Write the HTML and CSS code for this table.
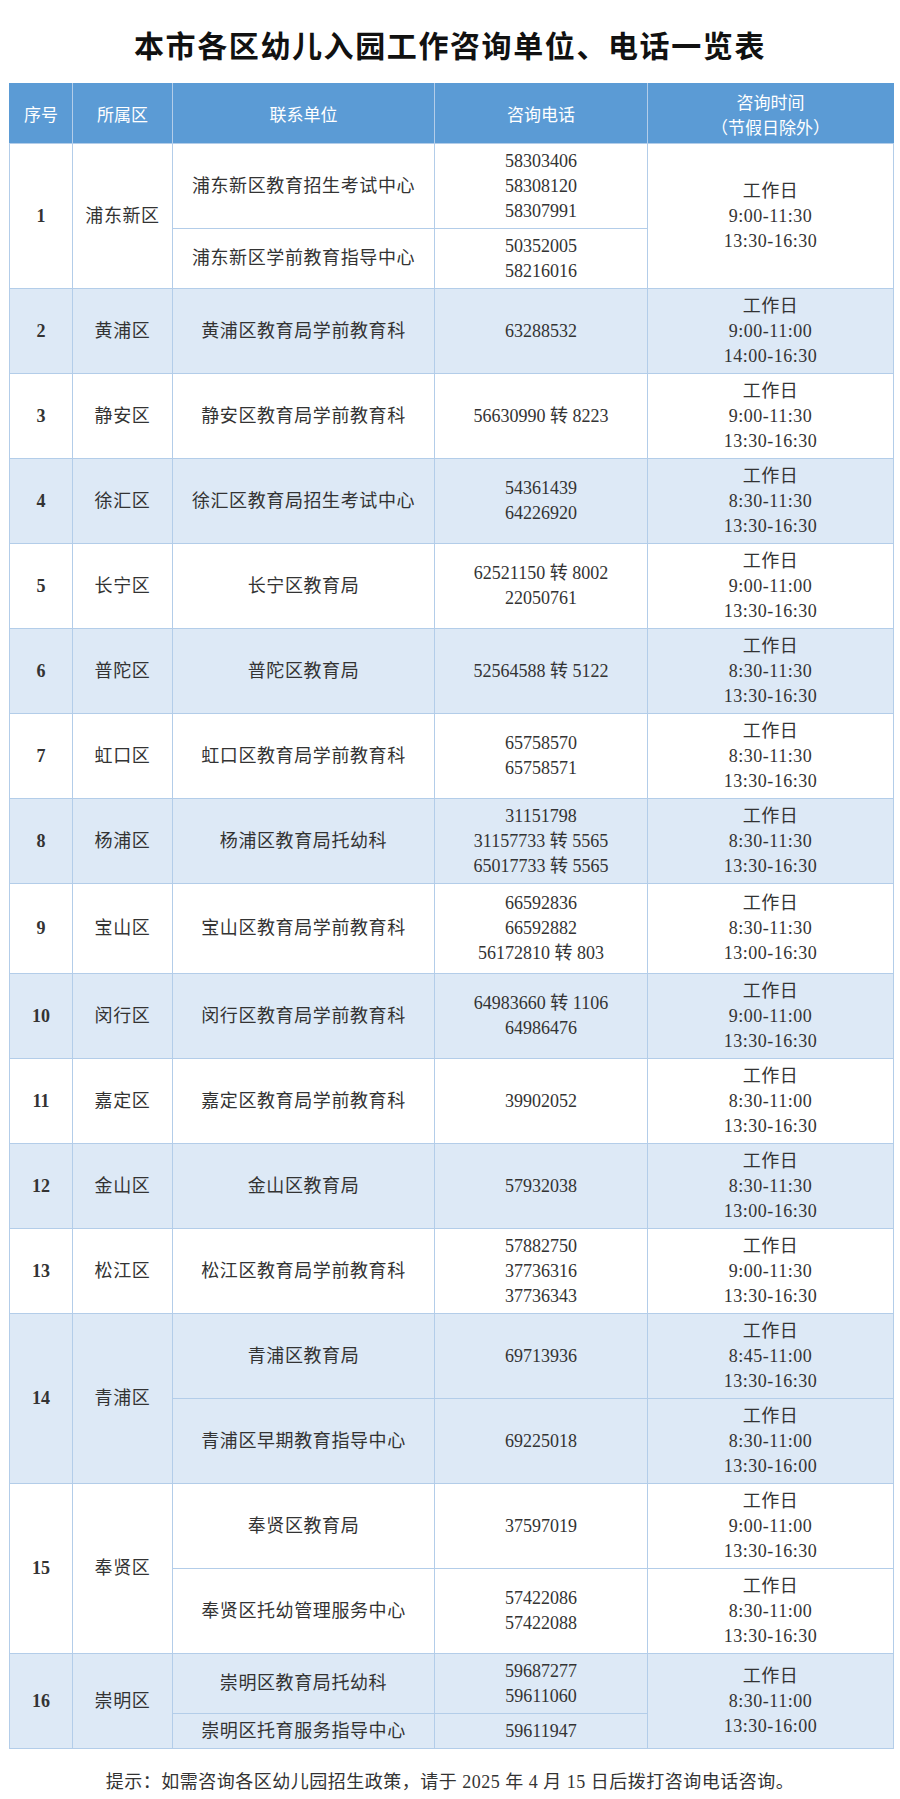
FILE: index.html
```html
<!DOCTYPE html>
<html lang="zh-CN">
<head>
<meta charset="utf-8">
<title>本市各区幼儿入园工作咨询单位、电话一览表</title>
<link rel="stylesheet" href="styles.css">
</head>
<body>
<h1 class="title">本市各区幼儿入园工作咨询单位、电话一览表</h1>
<table class="tbl">
  <colgroup>
    <col class="c1"><col class="c2"><col class="c3"><col class="c4"><col class="c5">
  </colgroup>
  <thead>
    <tr class="head">
      <th>序号</th><th>所属区</th><th>联系单位</th><th>咨询电话</th><th>咨询时间<br>（节假日除外）</th>
    </tr>
  </thead>
  <tbody>
    <tr class="h85">
      <td class="no" rowspan="2">1</td><td class="zh" rowspan="2">浦东新区</td><td class="zh">浦东新区教育招生考试中心</td><td>58303406<br>58308120<br>58307991</td><td class="tm" rowspan="2">工作日<br>9:00-11:30<br>13:30-16:30</td>
    </tr>
    <tr class="h60"><td class="zh">浦东新区学前教育指导中心</td><td>50352005<br>58216016</td></tr>

    <tr class="h85 alt"><td class="no">2</td><td class="zh">黄浦区</td><td class="zh">黄浦区教育局学前教育科</td><td>63288532</td><td class="tm">工作日<br>9:00-11:00<br>14:00-16:30</td></tr>
    <tr class="h85"><td class="no">3</td><td class="zh">静安区</td><td class="zh">静安区教育局学前教育科</td><td>56630990 转 8223</td><td class="tm">工作日<br>9:00-11:30<br>13:30-16:30</td></tr>
    <tr class="h85 alt"><td class="no">4</td><td class="zh">徐汇区</td><td class="zh">徐汇区教育局招生考试中心</td><td>54361439<br>64226920</td><td class="tm">工作日<br>8:30-11:30<br>13:30-16:30</td></tr>
    <tr class="h85"><td class="no">5</td><td class="zh">长宁区</td><td class="zh">长宁区教育局</td><td>62521150 转 8002<br>22050761</td><td class="tm">工作日<br>9:00-11:00<br>13:30-16:30</td></tr>
    <tr class="h85 alt"><td class="no">6</td><td class="zh">普陀区</td><td class="zh">普陀区教育局</td><td>52564588 转 5122</td><td class="tm">工作日<br>8:30-11:30<br>13:30-16:30</td></tr>
    <tr class="h85"><td class="no">7</td><td class="zh">虹口区</td><td class="zh">虹口区教育局学前教育科</td><td>65758570<br>65758571</td><td class="tm">工作日<br>8:30-11:30<br>13:30-16:30</td></tr>
    <tr class="h85 alt"><td class="no">8</td><td class="zh">杨浦区</td><td class="zh">杨浦区教育局托幼科</td><td>31151798<br>31157733 转 5565<br>65017733 转 5565</td><td class="tm">工作日<br>8:30-11:30<br>13:30-16:30</td></tr>
    <tr class="h90"><td class="no">9</td><td class="zh">宝山区</td><td class="zh">宝山区教育局学前教育科</td><td>66592836<br>66592882<br>56172810 转 803</td><td class="tm">工作日<br>8:30-11:30<br>13:00-16:30</td></tr>
    <tr class="h85 alt"><td class="no">10</td><td class="zh">闵行区</td><td class="zh">闵行区教育局学前教育科</td><td>64983660 转 1106<br>64986476</td><td class="tm">工作日<br>9:00-11:00<br>13:30-16:30</td></tr>
    <tr class="h85"><td class="no">11</td><td class="zh">嘉定区</td><td class="zh">嘉定区教育局学前教育科</td><td>39902052</td><td class="tm">工作日<br>8:30-11:00<br>13:30-16:30</td></tr>
    <tr class="h85 alt"><td class="no">12</td><td class="zh">金山区</td><td class="zh">金山区教育局</td><td>57932038</td><td class="tm">工作日<br>8:30-11:30<br>13:00-16:30</td></tr>
    <tr class="h85"><td class="no">13</td><td class="zh">松江区</td><td class="zh">松江区教育局学前教育科</td><td>57882750<br>37736316<br>37736343</td><td class="tm">工作日<br>9:00-11:30<br>13:30-16:30</td></tr>

    <tr class="h85 alt"><td class="no" rowspan="2">14</td><td class="zh" rowspan="2">青浦区</td><td class="zh">青浦区教育局</td><td>69713936</td><td class="tm">工作日<br>8:45-11:00<br>13:30-16:30</td></tr>
    <tr class="h85 alt"><td class="zh">青浦区早期教育指导中心</td><td>69225018</td><td class="tm">工作日<br>8:30-11:00<br>13:30-16:00</td></tr>

    <tr class="h85"><td class="no" rowspan="2">15</td><td class="zh" rowspan="2">奉贤区</td><td class="zh">奉贤区教育局</td><td>37597019</td><td class="tm">工作日<br>9:00-11:00<br>13:30-16:30</td></tr>
    <tr class="h85"><td class="zh">奉贤区托幼管理服务中心</td><td>57422086<br>57422088</td><td class="tm">工作日<br>8:30-11:00<br>13:30-16:30</td></tr>

    <tr class="h60 alt"><td class="no" rowspan="2">16</td><td class="zh" rowspan="2">崇明区</td><td class="zh">崇明区教育局托幼科</td><td>59687277<br>59611060</td><td class="tm" rowspan="2">工作日<br>8:30-11:00<br>13:30-16:00</td></tr>
    <tr class="h35 alt"><td class="zh">崇明区托育服务指导中心</td><td>59611947</td></tr>
  </tbody>
</table>
<p class="note">提示：如需咨询各区幼儿园招生政策，请于 2025 年 4 月 15 日后拨打咨询电话咨询。</p>
</body>
</html>
```

FILE: styles.css
```css
html, body {
  margin: 0;
  padding: 0;
  background: #ffffff;
}

body {
  font-family: "Liberation Serif", "Noto Sans CJK SC", serif;
  color: #333333;
}

.title {
  margin: 0;
  height: 83px;
  line-height: 88px;
  text-align: center;
  font-family: "Noto Sans CJK SC", sans-serif;
  font-size: 30px;
  font-weight: 700;
  letter-spacing: 1.6px;
  color: #111111;
}

.tbl {
  margin: 0 0 0 9px;
  width: 884px;
  border-collapse: collapse;
  table-layout: fixed;
  font-size: 18px;
  line-height: 25px;
}

.c1 { width: 63px; }
.c2 { width: 100px; }
.c3 { width: 262px; }
.c4 { width: 213px; }
.c5 { width: 246px; }

.tbl th,
.tbl td {
  border: 1.5px solid #b3cde9;
  padding: 0;
  text-align: center;
  vertical-align: middle;
}

.tbl td.zh {
  letter-spacing: 0.6px;
}

.tbl td.tm {
  letter-spacing: 0.5px;
}

.head {
  height: 60px;
  background: #5b9bd5;
}

.head th {
  font-family: "Noto Sans CJK SC", sans-serif;
  font-weight: 400;
  font-size: 17px;
  line-height: 25px;
  color: #ffffff;
  border-color: #5b9bd5 #b3cde9 #b3cde9 #b3cde9;
}

.head th:first-child { border-left-color: #5b9bd5; }
.head th:last-child { border-right-color: #5b9bd5; }

.alt {
  background: #dde9f6;
}

.no {
  font-weight: 700;
}

.h85 { height: 85px; }
.h90 { height: 90px; }
.h60 { height: 60px; }
.h35 { height: 35px; }

.note {
  margin: 21px 0 0 0;
  text-align: center;
  font-size: 18px;
  line-height: 24px;
  letter-spacing: 0.5px;
  color: #333333;
}
```
